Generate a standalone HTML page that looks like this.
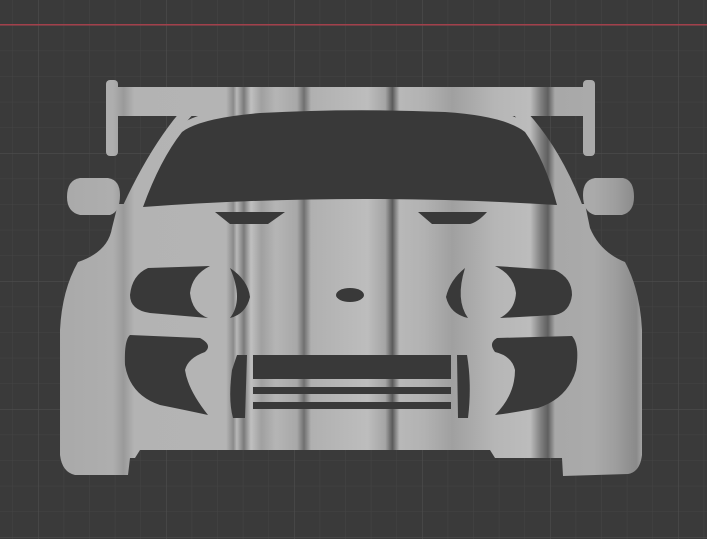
<!DOCTYPE html>
<html><head><meta charset="utf-8"><style>
html,body{margin:0;padding:0;background:#3a3a3a;overflow:hidden}
svg{display:block}
</style></head><body>
<svg width="707" height="539" viewBox="0 0 707 539" xmlns="http://www.w3.org/2000/svg">
<defs>
<pattern id="minor" x="12.4" y="25" width="25.6" height="25.6" patternUnits="userSpaceOnUse">
<path d="M0 0H25.6M0 0V25.6" stroke="#444" stroke-width="1" fill="none"/>
</pattern>
<pattern id="major" x="38" y="25" width="128" height="128" patternUnits="userSpaceOnUse">
<path d="M0 0H128M0 0V128" stroke="#4d4d4d" stroke-width="1.2" fill="none"/>
</pattern>
<linearGradient id="stripes" gradientUnits="userSpaceOnUse" x1="0" y1="0" x2="707" y2="0">
<stop offset="0.08" stop-color="#a9a9a9"/>
<stop offset="0.16" stop-color="#aeaeae"/>
<stop offset="0.175" stop-color="#9a9a9a"/>
<stop offset="0.19" stop-color="#b3b3b3"/>
<stop offset="0.32" stop-color="#b4b4b4"/>
<stop offset="0.33" stop-color="#8a8a8a"/>
<stop offset="0.335" stop-color="#b8b8b8"/>
<stop offset="0.345" stop-color="#7a7a7a"/>
<stop offset="0.355" stop-color="#c0c0c0"/>
<stop offset="0.37" stop-color="#a0a0a0"/>
<stop offset="0.39" stop-color="#b5b5b5"/>
<stop offset="0.42" stop-color="#a8a8a8"/>
<stop offset="0.43" stop-color="#707070"/>
<stop offset="0.44" stop-color="#b0b0b0"/>
<stop offset="0.52" stop-color="#bdbdbd"/>
<stop offset="0.545" stop-color="#a5a5a5"/>
<stop offset="0.555" stop-color="#5a5a5a"/>
<stop offset="0.565" stop-color="#b8b8b8"/>
<stop offset="0.6" stop-color="#b2b2b2"/>
<stop offset="0.64" stop-color="#a0a0a0"/>
<stop offset="0.7" stop-color="#b6b6b6"/>
<stop offset="0.75" stop-color="#bcbcbc"/>
<stop offset="0.765" stop-color="#7f7f7f"/>
<stop offset="0.775" stop-color="#5f5f5f"/>
<stop offset="0.785" stop-color="#a8a8a8"/>
<stop offset="0.84" stop-color="#aaaaaa"/>
<stop offset="0.87" stop-color="#9e9e9e"/>
<stop offset="0.9" stop-color="#8a8a8a"/>
<stop offset="0.91" stop-color="#aaaaaa"/>
</linearGradient>
</defs>
<rect width="707" height="539" fill="#3a3a3a"/>
<rect width="707" height="539" fill="url(#minor)"/>
<rect width="707" height="539" fill="url(#major)"/>
<rect x="0" y="24" width="707" height="1.5" fill="#a2404b"/>

<g fill="url(#stripes)">
  <rect x="106" y="80" width="12" height="76" rx="4"/>
  <rect x="583" y="80" width="12" height="76" rx="4"/>
  <rect x="116" y="87" width="470" height="29"/>
  <path d="M180 112 L195 112 Q160 150 138 212 L120 212 Q148 150 180 112Z"/>
  <path d="M512 112 L527 112 Q562 150 585 212 L565 212 Q540 150 512 112Z"/>
  <!-- windshield frame -->
  <path d="M135 212 Q152 160 176 128 Q196 110 260 105 Q350 100 445 104 Q512 108 532 128 Q552 160 566 210Z"/>
  <path d="M80 178 L108 178 Q120 180 120 195 Q120 212 110 215 L80 215 Q67 212 67 197 Q67 180 80 178Z"/>
  <path d="M595 178 L623 178 Q634 180 634 197 Q634 212 622 215 L595 215 Q583 212 583 195 Q583 180 595 178Z"/>
  <path d="M118 204 L585 204 L590 228 Q600 252 625 262 Q640 290 642 330 L642 455 Q640 472 628 474 L563 476 L562 458 L495 458 L490 450 L140 450 L135 458 L130 458 L128 475 L75 475 Q62 472 60 455 L60 330 Q62 290 78 262 Q108 252 112 228 Z"/>
</g>

<g fill="#393939">
  <path d="M143 207 Q160 160 182 132 Q200 118 260 113 Q350 108 445 112 Q505 116 525 132 Q545 160 557 205 Q350 192 143 207Z"/>
  <path d="M215 212 L285 212 L268 224 L230 224 Z"/>
  <path d="M418 212 L487 212 Q478 222 470 224 L432 224 Z"/>
  <ellipse cx="350" cy="295" rx="14" ry="7"/>
  <path d="M148 268 L210 266 Q192 275 190 293 Q192 312 208 318 L150 313 Q130 310 130 295 Q132 275 148 268Z"/>
  <path d="M230 268 Q248 280 250 297 Q246 314 230 318 Q244 300 230 268Z"/>
  <path d="M465 268 Q450 280 446 297 Q450 314 468 318 Q455 300 465 268Z"/>
  <path d="M495 266 L555 270 Q572 278 572 295 Q570 312 555 315 L500 318 Q515 310 516 293 Q514 275 495 266Z"/>
  <path d="M130 335 L200 338 Q213 345 205 352 Q188 358 185 370 Q188 390 208 415 Q185 410 160 405 Q130 395 125 365 Q124 340 130 335Z"/>
  <path d="M497 338 L572 336 Q580 345 576 370 Q568 398 538 408 Q512 413 495 415 Q515 395 515 370 Q512 356 495 352 Q488 343 497 338Z"/>
  <path d="M237 355 L247 355 L245 418 L233 418 Q228 400 232 370 Z"/>
  <path d="M457 355 L467 355 Q472 385 468 418 L458 418 Z"/>
  <rect x="253" y="355" width="198" height="24"/>
  <rect x="253" y="387" width="198" height="7"/>
  <rect x="253" y="402" width="198" height="7"/>
</g>
</svg>
</body></html>
